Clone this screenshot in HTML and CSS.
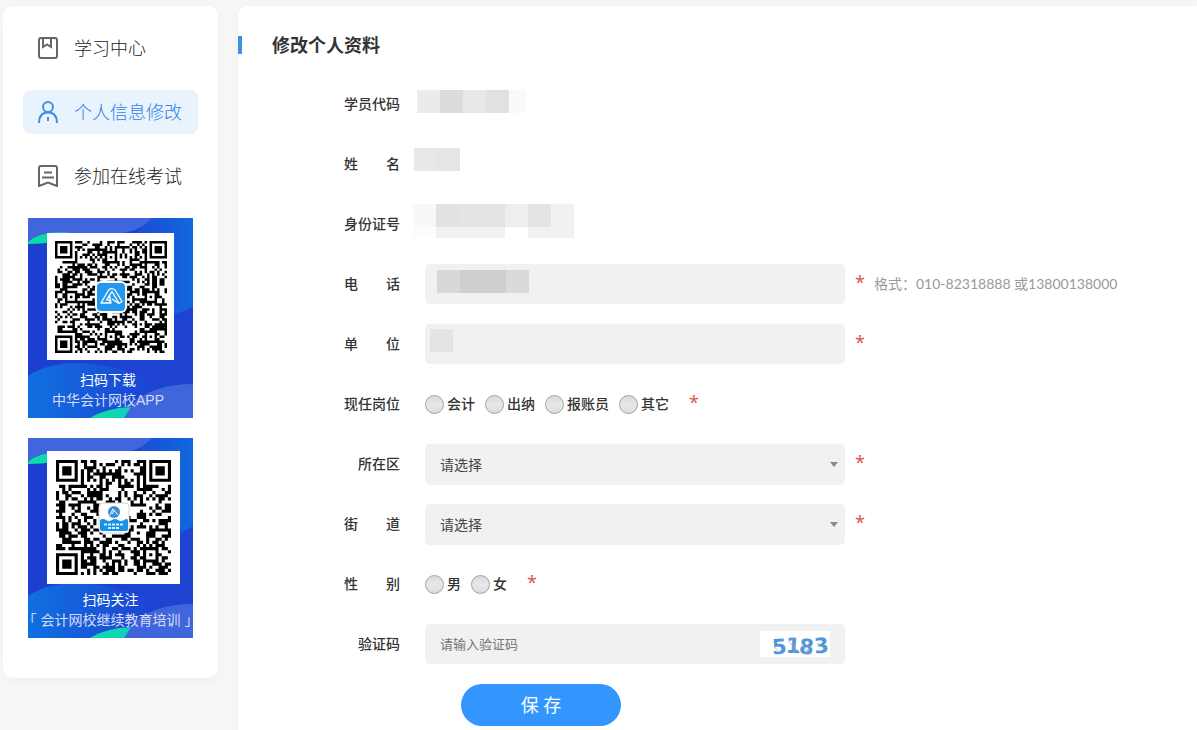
FILE: index.html
```html
<!DOCTYPE html>
<html lang="zh-CN">
<head>
<meta charset="utf-8">
<title>修改个人资料</title>
<link rel="stylesheet" href="styles.css">
</head>
<body>
<svg class="defs" aria-hidden="true">
  <defs>
    <linearGradient id="baseFill" x1="0" y1="0" x2="1" y2="0"><stop offset="0" stop-color="#1c3fd0"/><stop offset="1" stop-color="#1f44d2"/></linearGradient>
    <linearGradient id="glowRight" x1="0" y1="0" x2="1" y2="0"><stop offset="0" stop-color="#1f43d2"/><stop offset="1" stop-color="#1169de"/></linearGradient>
    <linearGradient id="glowLeft" x1="0" y1="0" x2="1" y2="0"><stop offset="0" stop-color="#1070e0"/><stop offset="1" stop-color="#1d42d1"/></linearGradient>
    <linearGradient id="mint" x1="0" y1="0" x2="1" y2="0"><stop offset="0" stop-color="#08e0a0"/><stop offset="1" stop-color="#14cfc0"/></linearGradient>
    <symbol id="promoArt" viewBox="0 0 165 200">
      <rect width="165" height="200" fill="url(#baseFill)"/>
      <path d="M165 0V88Q140 104 118 90Q80 60 104 20L120 0Z" fill="url(#glowRight)"/>
      <path d="M0 0H124Q112 14 88 16Q40 14 0 26Z" fill="#3f66dc"/>
      <path d="M0 24Q16 10 50 16Q28 26 0 26Z" fill="url(#mint)"/>
      <path d="M0 158Q20 144 56 145Q104 150 130 168L90 200H0Z" fill="url(#glowLeft)"/>
      <path d="M165 166Q126 166 104 186L94 200H165Z" fill="#4066dc"/>
      <path d="M62 200Q78 190 103 189L96 200Z" fill="url(#mint)"/>
    </symbol>
  </defs>
</svg>
<div class="page">
  <aside class="sidebar">
    <nav class="menu">
      <a class="menu-item" href="#study">
        <svg class="menu-icon" viewBox="0 0 20 22"><rect x="1" y="1" width="18" height="20" rx="2"/><path d="M5 1V10L9 7.500L13 10V1"/></svg>
        <span>学习中心</span>
      </a>
      <a class="menu-item active" href="#profile">
        <svg class="menu-icon" viewBox="0 0 20 22"><circle cx="10" cy="6" r="5"/><path d="M1 22C1 15 4.500 11.500 10 11.500S19 15 19 22M10 16V20"/></svg>
        <span>个人信息修改</span>
      </a>
      <a class="menu-item" href="#exam">
        <svg class="menu-icon" viewBox="0 0 20 22"><path d="M3 1H17Q19 1 19 3V21L10 17.500L1 21V3Q1 1 3 1ZM6 7.500H14M4 12.500H16"/></svg>
        <span>参加在线考试</span>
      </a>
    </nav>
    <div class="promo app">
      <svg class="promo-bg"><use href="#promoArt"/></svg>
      <div class="qr-box">
        <svg class="qr" data-version="7" data-seed="71" role="img" aria-label="中华会计网校APP"></svg>
        <svg class="qr-logo" viewBox="0 0 32 32"><rect width="32" height="32" rx="6" fill="#fff"/><rect x="2" y="2" width="28" height="28" rx="4" fill="#2497ee"/><path d="M14 8.500L6 22H16L14 19H11.500L17 10.500L24 22.500L27 20.500L20 9Q17 6.500 14 8.500ZM16 22L14.500 14.500M24 22.500L17 18" fill="none" stroke="#fff" stroke-width="1.300" stroke-linejoin="round"/></svg>
      </div>
      <p class="promo-text">扫码下载</p>
      <p class="promo-text soft">中华会计网校APP</p>
    </div>
    <div class="promo follow">
      <svg class="promo-bg"><use href="#promoArt"/></svg>
      <div class="qr-box">
        <svg class="qr" data-version="5" data-seed="19" role="img" aria-label="会计网校继续教育培训"></svg>
        <svg class="qr-logo" viewBox="0 0 32 32"><rect x="1" y="1" width="30" height="30" rx="4" fill="#fff" stroke="#cfd6dc"/><circle cx="16" cy="10" r="6" fill="#3c8fd6"/><path d="M12 13L15 7L20 13M14 12L16 9" fill="none" stroke="#fff"/><path d="M2 18Q5 16 8 18T14 18T20 18T26 18T30 18V27Q30 29 28 29H4Q2 29 2 27Z" fill="#1593e6"/><path d="M6 22.500H26M10 26H22" stroke="#d8efff" stroke-width="2" stroke-dasharray="3 1"/></svg>
      </div>
      <p class="promo-text">扫码关注</p>
      <p class="promo-text soft">「 会计网校继续教育培训 」</p>
    </div>
  </aside>

  <main class="content">
    <h1 class="title">修改个人资料</h1>
    <form class="form">
      <div class="row">
        <span class="label">学员代码</span>
        <svg class="masked" width="200" height="40"><g transform="translate(-8 6)"><path fill="#ebebeb" d="M0 0h23v23h-23z"/><path fill="#dcdcdc" d="M23 0h23v23h-23z"/><path fill="#e8e8e8" d="M46 0h23v23h-23z"/><path fill="#e2e1df" d="M69 0h23v23h-23z"/><path fill="#fafafa" d="M92 0h17v23h-17z"/></g></svg>
      </div>
      <div class="row">
        <span class="label">姓　　名</span>
        <svg class="masked" width="200" height="40"><g transform="translate(-11 4)"><path fill="#e8e8e8" d="M0 0h23v23h-23z"/><path fill="#e5e5e5" d="M23 0h23v23h-23z"/></g></svg>
      </div>
      <div class="row">
        <span class="label">身份证号</span>
        <svg class="masked" width="200" height="40"><g transform="translate(-12 0)"><path fill="#f8f8f8" d="M0 0h23v23h-23z"/><path fill="#e2e2e2" d="M23 0h23v23h-23z"/><path fill="#e4e4e4" d="M46 0h46v23h-46z"/><path fill="#eee" d="M92 0h23v23h-23z"/><path fill="#e4e4e4" d="M115 0h23v23h-23z"/><path fill="#f1f1f1" d="M138 0h23v23h-23z"/><path fill="#fcfcfc" d="M0 23h23v11h-23z"/><path fill="#f1f1f1" d="M23 23h69v11h-69zM115 23h46v11h-46z"/></g></svg>
      </div>
      <div class="row">
        <label class="label" for="phone">电　　话</label>
        <div class="field">
          <input id="phone" class="control" type="text">
          <svg class="mask-phone" width="92" height="23"><path fill="#d9d8d9" d="M0 0h23v23h-23z"/><path fill="#cfcfcf" d="M23 0h46v23h-46z"/><path fill="#dadada" d="M69 0h23v23h-23z"/></svg>
        </div>
        <span class="star">*</span>
        <span class="hint">格式：010-82318888 或13800138000</span>
      </div>
      <div class="row">
        <label class="label" for="unit">单　　位</label>
        <div class="field">
          <input id="unit" class="control" type="text">
          <svg class="mask-unit" width="23" height="23"><path fill="#e4e4e4" d="M0 0h23v23h-23z"/></svg>
        </div>
        <span class="star">*</span>
      </div>
      <div class="row" role="radiogroup" aria-labelledby="postLabel">
        <span class="label" id="postLabel">现任岗位</span>
        <div class="options">
          <label class="option"><input type="radio" name="post">会计</label>
          <label class="option"><input type="radio" name="post">出纳</label>
          <label class="option"><input type="radio" name="post">报账员</label>
          <label class="option"><input type="radio" name="post">其它</label>
        </div>
        <span class="star after-options">*</span>
      </div>
      <div class="row">
        <label class="label" for="district">所在区</label>
        <div class="field">
          <select id="district" class="control"><option>请选择</option></select>
          <svg class="arrow" width="8" height="5"><path d="M0 0H8L4 5Z"/></svg>
        </div>
        <span class="star">*</span>
      </div>
      <div class="row">
        <label class="label" for="street">街　　道</label>
        <div class="field">
          <select id="street" class="control"><option>请选择</option></select>
          <svg class="arrow" width="8" height="5"><path d="M0 0H8L4 5Z"/></svg>
        </div>
        <span class="star">*</span>
      </div>
      <div class="row" role="radiogroup" aria-labelledby="sexLabel">
        <span class="label" id="sexLabel">性　　别</span>
        <div class="options">
          <label class="option"><input type="radio" name="sex">男</label>
          <label class="option"><input type="radio" name="sex">女</label>
        </div>
        <span class="star after-options">*</span>
      </div>
      <div class="row">
        <label class="label" for="code">验证码</label>
        <div class="field">
          <input id="code" class="control" type="text" placeholder="请输入验证码">
          <svg class="captcha" viewBox="0 0 70 26"><rect width="70" height="26" fill="#fff"/><g class="captcha-digits"><text x="12" y="23" transform="rotate(-4 19 16)">5</text><text x="26" y="22" transform="rotate(3 34 14)">1</text><text x="39" y="23" transform="rotate(6 46 17)">8</text><text x="54" y="22" transform="rotate(-5 61 14)">3</text></g><path d="M14 16L22 23M28 10L40 22M32 7L34 22M41 14L52 24M44 23L52 14M57 12L67 20" fill="none" stroke="#a2a7ad" stroke-width="0.700"/></svg>
        </div>
      </div>
      <button class="save" type="submit">保 存</button>
    </form>
  </main>
</div>
<script src="qr.js"></script>
</body>
</html>
```

FILE: styles.css
```css
* { box-sizing: border-box; }

body {
  margin: 0;
  background: #f7f7f7;
  color: #333;
  font: 14px/20px "Noto Sans", "Noto Sans CJK SC", sans-serif;
}

h1, p { margin: 0; }

.defs { position: absolute; width: 0; height: 0; }

.page {
  display: flex;
  align-items: stretch;
  gap: 20px;
  min-height: 100vh;
  padding: 6px 0 0 3px;
}

.sidebar {
  flex: none;
  align-self: flex-start;
  width: 215px;
  padding: 20px 20px 40px;
  border-radius: 10px;
  background: #fff;
  box-shadow: 0 2px 12px rgba(0, 0, 0, 0.04);
}

.menu {
  display: flex;
  flex-direction: column;
  gap: 20px;
}

.menu-item {
  display: flex;
  align-items: center;
  gap: 16px;
  height: 44px;
  padding: 0 15px;
  border-radius: 8px;
  color: #222;
  font-size: 18px;
  font-weight: 300;
  white-space: nowrap;
  text-decoration: none;
}

.menu-item.active { background: #e8f3fe; color: #2f82e2; }

.menu-icon {
  flex: none;
  width: 20px;
  height: 22px;
  fill: none;
  stroke: #666;
  stroke-width: 2;
}

.active .menu-icon { stroke: #3f8fe8; }

.promo {
  position: relative;
  display: flex;
  flex-direction: column;
  align-items: center;
  height: 200px;
  margin: 20px 5px 0;
}

.promo-bg {
  position: absolute;
  inset: 0;
  width: 100%;
  height: 100%;
}

.app { padding-top: 15px; }
.follow { padding-top: 13px; }

.qr-box {
  position: relative;
  display: flex;
  align-items: center;
  justify-content: center;
  flex: none;
  width: 127px;
  height: 127px;
  margin-bottom: 10px;
  background: #fff;
}

.follow .qr-box { width: 133px; height: 133px; margin-bottom: 6px; margin-left: 6px; }

.qr { width: 112px; height: 112px; }
.follow .qr { width: 115px; height: 115px; }

.qr-logo { position: absolute; width: 32px; height: 32px; }

.promo-text {
  position: relative;
  color: #fff;
  font-family: "Liberation Sans", "Noto Sans CJK SC", sans-serif;
  white-space: nowrap;
}

.app .promo-text { padding-right: 5px; }

.promo-text.soft { color: #d9dcf8; }

.content {
  flex: 1;
  min-width: 0;
  padding: 30px 0 4px;
  border-radius: 10px 0 0 0;
  background: #fff;
  box-shadow: 0 2px 12px rgba(0, 0, 0, 0.04);
}

.title {
  padding-left: 30px;
  border-left: 4px solid #3f8fe8;
  font-size: 18px;
  line-height: 18px;
  font-weight: 700;
}

.form {
  display: flex;
  flex-direction: column;
  align-items: flex-start;
  gap: 20px;
  padding-top: 30px;
}

.row {
  display: flex;
  align-items: center;
  width: 100%;
  height: 40px;
}

.label {
  flex: none;
  width: 162px;
  margin-right: 25px;
  text-align: right;
  font-weight: 500;
  white-space: pre;
}

.masked { overflow: visible; }

.field { position: relative; flex: 0 1 420px; align-self: flex-start; }

.control {
  display: block;
  width: 100%;
  height: 40px;
  padding: 0 15px;
  border: 0;
  border-radius: 5px;
  background: #f1f1f1;
  color: #444;
  font: inherit;
  appearance: none;
}

select.control { height: 41px; }
input.control { font-size: 13px; }
.control::placeholder { color: #757575; opacity: 1; }

.mask-phone { position: absolute; left: 12px; top: 6px; }
.mask-unit { position: absolute; left: 5px; top: 5px; }
.arrow { position: absolute; right: 7px; top: 18px; fill: #888; pointer-events: none; }

.captcha { position: absolute; right: 15px; top: 7px; width: 70px; height: 26px; overflow: visible; }
.captcha-digits { fill: #4f96dc; font: 700 21px "DejaVu Sans", sans-serif; }

.star {
  flex: none;
  width: 19px;
  margin-left: 10px;
  padding-bottom: 4px;
  color: #dc5650;
  font-size: 18px;
}

.star.after-options { margin-left: 20px; }

.hint {
  color: #999;
  font-family: Lato, "Noto Sans CJK SC", sans-serif;
  white-space: nowrap;
}

.options { display: flex; gap: 10px; }

.option {
  display: flex;
  align-items: center;
  gap: 3px;
  font-weight: 500;
}

.option input {
  width: 19px;
  height: 19px;
  margin: 0;
  border: 1px solid #a3a3a3;
  border-radius: 50%;
  background: linear-gradient(#d9d9d9, #e8e8e8 50%, #dcdcdc);
  appearance: none;
}

.save {
  width: 160px;
  height: 42px;
  margin-left: 223px;
  border: 0;
  border-radius: 21px;
  background: #3296fe;
  color: #fff;
  font: inherit;
  font-size: 18px;
}
```

FILE: qr.js
```js
// Draws each code: finder, alignment and timing patterns around a seeded data area.
function drawCode(svg) {
  const version = Number(svg.dataset.version);
  const size = 17 + 4 * version;
  const centers = version === 7 ? [6, 22, 38] : [6, 30];
  let seed = Number(svg.dataset.seed);
  const random = () => {
    seed = (seed * 1103515245 + 12345) % 2147483648;
    return seed / 2147483648;
  };
  const cells = [];
  for (let y = 0; y < size; y++) {
    cells.push([]);
    for (let x = 0; x < size; x++) {
      cells[y].push(x === 6 || y === 6 ? (x + y) % 2 === 0 : random() < 0.5);
    }
  }
  const ring = (cx, cy, radius, gap) => {
    for (let dy = -radius; dy <= radius; dy++) {
      for (let dx = -radius; dx <= radius; dx++) {
        const x = cx + dx;
        const y = cy + dy;
        if (x < 0 || y < 0 || x >= size || y >= size) continue;
        const d = Math.max(Math.abs(dx), Math.abs(dy));
        cells[y][x] = d !== gap && d !== 4;
      }
    }
  };
  for (const cy of centers) for (const cx of centers) ring(cx, cy, 2, 1);
  ring(3, 3, 4, 2);
  ring(size - 4, 3, 4, 2);
  ring(3, size - 4, 4, 2);
  let path = "";
  cells.forEach((line, y) => line.forEach((on, x) => {
    if (on) path += `M${x} ${y}h1v1h-1z`;
  }));
  svg.setAttribute("viewBox", `0 0 ${size} ${size}`);
  const shape = document.createElementNS("http://www.w3.org/2000/svg", "path");
  shape.setAttribute("d", path);
  svg.append(shape);
}
document.querySelectorAll(".qr").forEach(drawCode);
```
